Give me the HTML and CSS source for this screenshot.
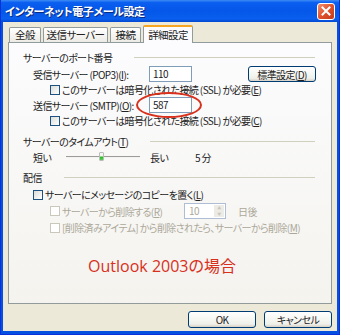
FILE: index.html
```html
<!DOCTYPE html>
<html lang="ja">
<head>
    <meta charset="UTF-8">
    <title>インターネット電子メール設定</title>
    <link rel="stylesheet" href="styles.css">
</head>
<body>
    <div class="window">
        <div class="titlebar">
            <span class="title">インターネット電子メール設定</span>
            <div class="close">
                <svg width="10" height="10" viewBox="0 0 10 10"><path d="M1.5 1.5L8.5 8.5M8.5 1.5L1.5 8.5" stroke="#fff" stroke-width="2" stroke-linecap="square"/></svg>
            </div>
        </div>
        <div class="body">
            <ul class="tabs">
                <li class="t1">全般</li>
                <li class="t2">送信サーバー</li>
                <li class="t3">接続</li>
                <li class="t4 active">詳細設定</li>
            </ul>
            <div class="panel">
                <div class="group">サーバーのポート番号</div>
                <div class="row field">
                    <span class="label">受信サーバー (POP3)(<u>I</u>):</span>
                    <span class="input">110</span>
                    <span class="button std">標準設定(<u>D</u>)</span>
                </div>
                <div class="row check indent">
                    <span class="box"></span>このサーバーは暗号化された接続 (SSL) が必要(<u>E</u>)
                </div>
                <div class="row field">
                    <span class="label">送信サーバー (SMTP)(<u>O</u>):</span>
                    <span class="input mark">587<span class="ellipse"></span></span>
                </div>
                <div class="row check indent">
                    <span class="box"></span>このサーバーは暗号化された接続 (SSL) が必要(<u>C</u>)
                </div>

                <div class="group">サーバーのタイムアウト(<u>T</u>)</div>
                <div class="row slider">
                    <span class="short">短い</span>
                    <span class="track"><span class="thumb"></span></span>
                    <span class="long">長い</span>
                    <span class="value">5 分</span>
                </div>

                <div class="group">配信</div>
                <div class="row check top">
                    <span class="box"></span>サーバーにメッセージのコピーを置く(<u>L</u>)
                </div>
                <div class="row check indent disabled days">
                    <span class="box"></span><span class="days-label">サーバーから削除する(<u>R</u>)</span>
                    <span class="spin">10<span class="arrows"><i>▲</i><i>▼</i></span></span>
                    <span class="unit">日後</span>
                </div>
                <div class="row check indent disabled">
                    <span class="box"></span>[削除済みアイテム] から削除されたら、サーバーから削除(<u>M</u>)
                </div>

                <div class="note">Outlook 2003の場合</div>
            </div>
            <div class="actions">
                <span class="button">OK</span>
                <span class="button">キャンセル</span>
            </div>
        </div>
    </div>
</body>
</html>
```

FILE: styles.css
```css
*{
    padding:0;
    margin:0;
    box-sizing:border-box;
}
body{
    width:340px;
    height:335px;
    overflow:hidden;
    font-family:"Noto Sans CJK JP", sans-serif;
    font-size:10px;
    letter-spacing:-0.6px;
    font-feature-settings:"palt";
    color:#222;
}
u{
    text-decoration:underline;
}
.window{
    width:340px;
    height:335px;
    display:flex;
    flex-direction:column;
    background:#0550e0;
    border:1px solid #0831d9;
    border-top:none;
}
.titlebar{
    height:22px;
    display:flex;
    align-items:center;
    justify-content:space-between;
    padding:0 4px 0 4px;
    background:linear-gradient(to bottom, #3d8cf5 0%, #0a5ef0 12%, #0457e8 50%, #0a5fef 85%, #0349d0 100%);
}
.title{
    color:#fff;
    font-weight:bold;
    font-size:11px;
    letter-spacing:-0.4px;
    text-shadow:1px 1px 0 #0a2a80;
}
.close{
    width:18px;
    height:17px;
    border:1px solid #fff;
    border-radius:3px;
    background:linear-gradient(to bottom right, #f09070, #e0502a 50%, #c33a1a);
    display:flex;
    align-items:center;
    justify-content:center;
}
.body{
    flex:1;
    margin:0 2px 3px 2px;
    background:#ece9d8;
    padding:3px 5px 0 5px;
    display:flex;
    flex-direction:column;
}
.tabs{
    list-style:none;
    display:flex;
    align-items:flex-end;
    height:17px;
    padding-left:1px;
    position:relative;
    z-index:1;
}
.tabs li{
    height:15px;
    line-height:14px;
    text-align:center;
    margin-right:2px;
    border:1px solid #919b9c;
    border-bottom:none;
    border-radius:2px 2px 0 0;
    background:linear-gradient(to bottom, #fff, #ecebe5);
    font-size:10.5px;
}
.t1{ width:32px; }
.t2{ width:65px; }
.t3{ width:31px; }
.t4{ width:50px; }
.tabs li.active{
    height:18px;
    line-height:15px;
    margin-bottom:-1px;
    border-top:2px solid #f5a623;
    background:#fcfcfe;
}
.panel{
    height:262px;
    border:1px solid #919b9c;
    background:linear-gradient(to bottom, #fcfcfe, #f4f3ee);
    padding:7px 16px 0 14px;
    display:flex;
    flex-direction:column;
}
.group{
    height:14px;
    display:flex;
    align-items:center;
    white-space:nowrap;
}
.group::after{
    content:"";
    flex:1;
    height:1px;
    background:#d0d0bf;
    margin-left:22px;
}
.row{
    display:flex;
    align-items:center;
    white-space:nowrap;
}
.field{
    height:16px;
    margin-top:2px;
    padding-left:10px;
}
.field + .check{
    margin-top:1px;
}
.check + .field{
    margin-top:1px;
}
.label{
    width:116px;
}
.input{
    position:relative;
    width:43px;
    height:16px;
    border:1px solid #7f9db9;
    background:#fff;
    padding-left:3px;
    line-height:14px;
}
.ellipse{
    position:absolute;
    left:-14px;
    top:-6px;
    width:66px;
    height:26px;
    border:2px solid #d8301c;
    border-radius:50%;
}
.button{
    height:16px;
    border:1px solid #003c74;
    border-radius:3px;
    background:linear-gradient(to bottom, #fff, #f0f0ea 80%, #d6d0c5);
    display:flex;
    align-items:center;
    justify-content:center;
    width:68px;
}
.std{
    margin-left:auto;
    margin-right:-1px;
}
.check{
    height:13px;
}
.indent{
    padding-left:27px;
}
.top{
    padding-left:10px;
    margin-top:4px;
}
.box{
    width:10px;
    height:10px;
    border:1px solid #1c5180;
    background:linear-gradient(to bottom right, #dcdcd7, #fff);
    margin-right:2px;
}
.disabled{
    color:#aca899;
}
.disabled .box{
    border-color:#cac8bb;
    background:#fff;
}
.check + .group{
    margin-top:7px;
}
.slider{
    height:14px;
    margin-top:2px;
    padding-left:10px;
}
.short{
    width:33px;
}
.track{
    position:relative;
    width:74px;
    height:2px;
    border-top:1px solid #9d9c99;
    background:#f3f3f3;
}
.thumb{
    position:absolute;
    left:33px;
    top:-5px;
    width:5px;
    height:9px;
    border:1px solid #bbb;
    border-radius:1px;
    background:linear-gradient(to bottom, #f4f4f0 40%, #21c11d 60%, #5ad256);
}
.long{
    margin-left:10px;
    width:45px;
}
.slider + .group{
    margin-top:6px;
}
.days{
    height:16px;
    margin-top:2px;
}
.days-label{
    width:122px;
}
.spin{
    position:relative;
    width:42px;
    height:16px;
    border:1px solid #aebdd3;
    background:#fff;
    padding-left:4px;
    line-height:14px;
    color:#aca899;
}
.arrows{
    position:absolute;
    right:1px;
    top:1px;
    width:10px;
    height:12px;
    display:flex;
    flex-direction:column;
    background:#ecebe5;
}
.arrows i{
    font-style:normal;
    font-size:4px;
    line-height:6px;
    text-align:center;
    color:#c9c7ba;
}
.unit{
    margin-left:12px;
}
.days + .check{
    margin-top:2px;
}
.note{
    margin-top:19px;
    text-align:center;
    color:#d8301c;
    font-family:"Open Sans", "Noto Sans CJK JP", sans-serif;
    font-size:16px;
    letter-spacing:0;
    padding-right:14px;
}
.actions{
    display:flex;
    justify-content:flex-end;
    gap:8px;
    margin-top:7px;
}
.actions .button{
    height:17px;
}
```
